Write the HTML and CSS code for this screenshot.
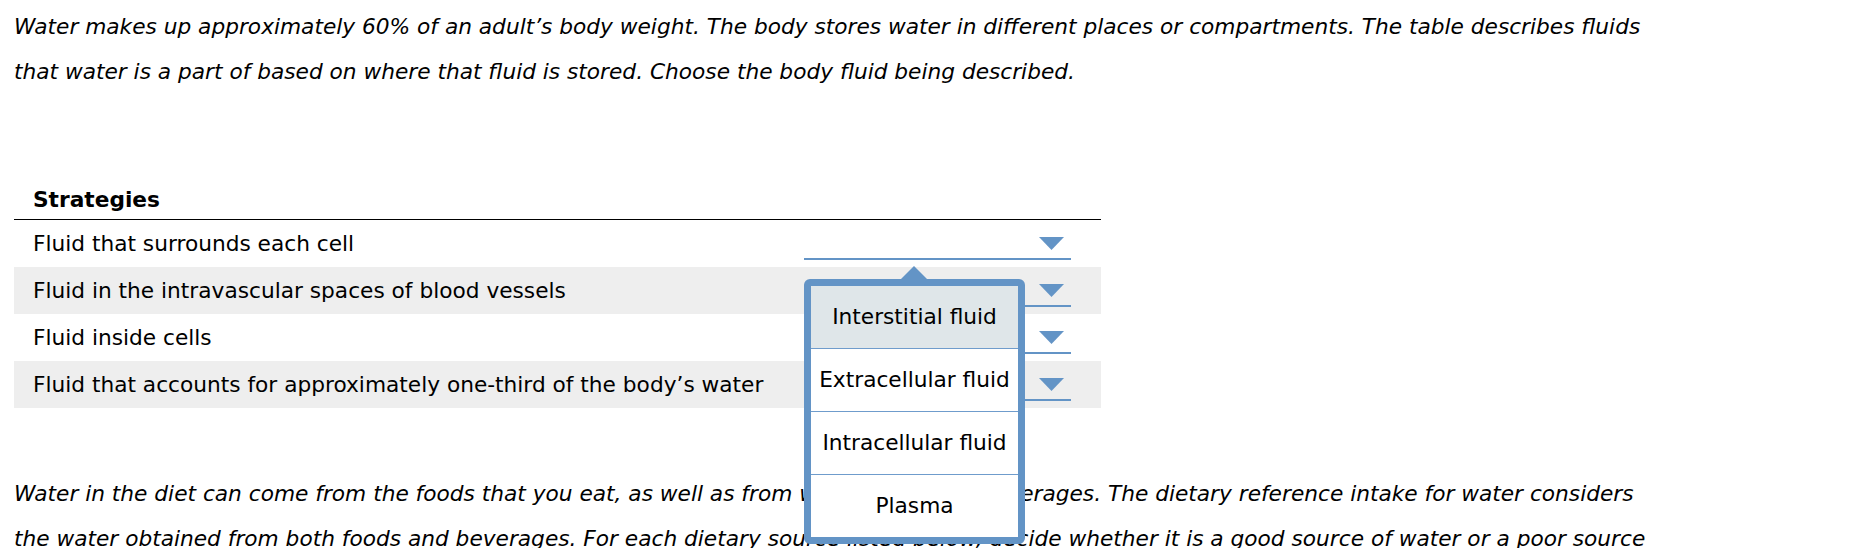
FILE: index.html
```html
<!DOCTYPE html>
<html lang="en">
<head>
  <meta charset="UTF-8">
  <title>Body fluids</title>
  <link rel="stylesheet" href="styles.css">
</head>
<body>

<p class="prompt">Water makes up approximately 60% of an adult’s body weight. The body stores water in different places or compartments. The table describes fluids that water is a part of based on where that fluid is stored. Choose the body fluid being described.</p>

<div class="match-table">
  <div class="match-head">Strategies</div>

  <div class="match-row">
    <div class="match-label">Fluid that surrounds each cell</div>
    <div class="drop open">
      <svg class="drop-arrow" width="25" height="13" viewBox="0 0 25 13"><polygon points="0,0 25,0 12.5,13"/></svg>
      <ul class="drop-menu">
        <li class="active">Interstitial fluid</li>
        <li>Extracellular fluid</li>
        <li>Intracellular fluid</li>
        <li>Plasma</li>
      </ul>
    </div>
  </div>

  <div class="match-row alt">
    <div class="match-label">Fluid in the intravascular spaces of blood vessels</div>
    <div class="drop">
      <svg class="drop-arrow" width="25" height="13" viewBox="0 0 25 13"><polygon points="0,0 25,0 12.5,13"/></svg>
    </div>
  </div>

  <div class="match-row">
    <div class="match-label">Fluid inside cells</div>
    <div class="drop">
      <svg class="drop-arrow" width="25" height="13" viewBox="0 0 25 13"><polygon points="0,0 25,0 12.5,13"/></svg>
    </div>
  </div>

  <div class="match-row alt">
    <div class="match-label">Fluid that accounts for approximately one-third of the body’s water</div>
    <div class="drop">
      <svg class="drop-arrow" width="25" height="13" viewBox="0 0 25 13"><polygon points="0,0 25,0 12.5,13"/></svg>
    </div>
  </div>
</div>

<p class="prompt second">Water in the diet can come from the foods that you eat, as well as from water and other beverages. The dietary reference intake for water considers the water obtained from both foods and beverages. For each dietary source listed below, decide whether it is a good source of water or a poor source of water.</p>

</body>
</html>
```

FILE: styles.css
```css
html, body {
  margin: 0;
  padding: 0;
  background: #fff;
  color: #000;
  font-family: "DejaVu Sans", Verdana, sans-serif;
  font-size: 21.7px;
}

body {
  height: 548px;
  padding: 4px 14px 0 14px;
  box-sizing: border-box;
  overflow: hidden;
}

.prompt {
  margin: 0;
  width: 1640px;
  font-style: italic;
  line-height: 45px;
}

.prompt.second {
  margin-top: 63px;
}

.match-table {
  width: 1087px;
  margin-top: 86px;
}

.match-head {
  height: 39px;
  line-height: 39px;
  padding-left: 19px;
  font-weight: bold;
  border-bottom: 1px solid #000;
}

.match-row {
  display: flex;
  height: 47px;
}

.match-row.alt {
  background: #eeeeee;
}

.match-label {
  flex: 1;
  padding-left: 19px;
  line-height: 47px;
}

/* select box: underline with the arrow on the right */
.drop {
  position: relative;
  box-sizing: border-box;
  width: 267px;
  height: 32px;
  margin: 8px 30px 0 0;
  padding: 0 7px 8px 0;
  border-bottom: 2px solid #6394c6;
  display: flex;
  justify-content: flex-end;
  align-items: flex-end;
}

.drop-arrow polygon {
  fill: #6394c6;
}

.drop-menu {
  position: absolute;
  top: 51px;
  left: 0;
  z-index: 5;
  width: 207px;
  margin: 0;
  padding: 0;
  list-style: none;
  background: #fff;
  border: 7px solid #6394c6;
  border-radius: 6px;
  font-style: normal;
}

.drop-menu::before {
  content: "";
  position: absolute;
  top: -20px;
  left: 90px;
  border-left: 13px solid transparent;
  border-right: 13px solid transparent;
  border-bottom: 13px solid #6394c6;
}

.drop-menu li {
  height: 62px;
  line-height: 62px;
  text-align: center;
  white-space: nowrap;
}

.drop-menu li + li {
  border-top: 1px solid #6f9ccc;
}

.drop-menu li.active {
  background: #dfe6e9;
}
```
